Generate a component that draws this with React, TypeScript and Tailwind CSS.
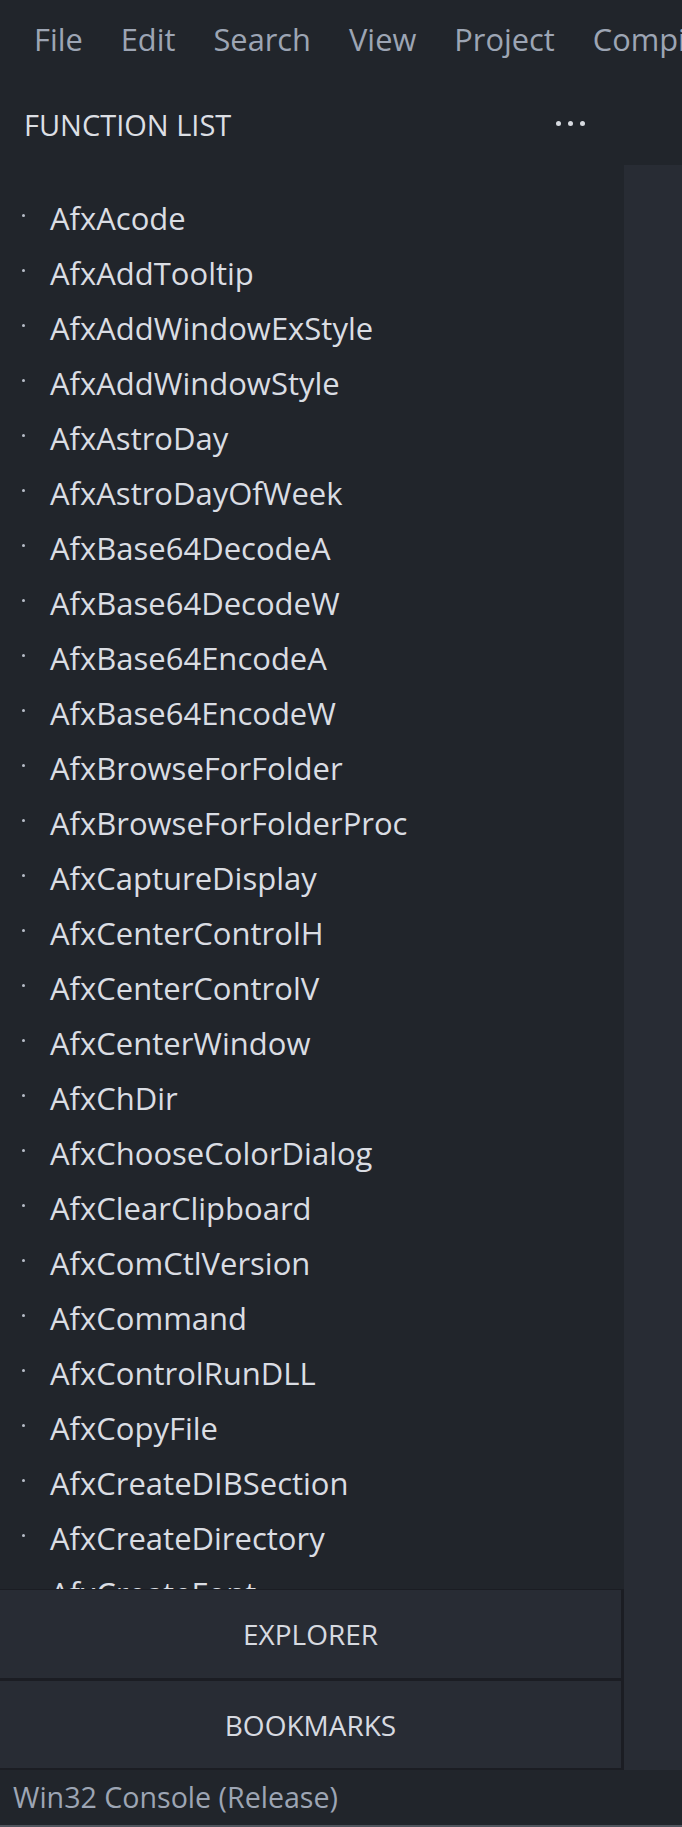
const menu = ["File", "Edit", "Search", "View", "Project", "Compile", "Help"]

const functions = [
    "AfxAcode",
    "AfxAddTooltip",
    "AfxAddWindowExStyle",
    "AfxAddWindowStyle",
    "AfxAstroDay",
    "AfxAstroDayOfWeek",
    "AfxBase64DecodeA",
    "AfxBase64DecodeW",
    "AfxBase64EncodeA",
    "AfxBase64EncodeW",
    "AfxBrowseForFolder",
    "AfxBrowseForFolderProc",
    "AfxCaptureDisplay",
    "AfxCenterControlH",
    "AfxCenterControlV",
    "AfxCenterWindow",
    "AfxChDir",
    "AfxChooseColorDialog",
    "AfxClearClipboard",
    "AfxComCtlVersion",
    "AfxCommand",
    "AfxControlRunDLL",
    "AfxCopyFile",
    "AfxCreateDIBSection",
    "AfxCreateDirectory",
    "AfxCreateFont",
    "AfxCreateFontEx",
]

export default function App() {
    return (
        <div className="w-[682px] h-[1827px] flex flex-col overflow-hidden bg-[#21252b] font-['Open_Sans',sans-serif]">
            {/* Menu bar */}
            <nav className="h-[80px] shrink-0 flex items-center gap-[38px] pl-[34px] whitespace-nowrap overflow-hidden text-[30.8px] text-[#9da5b4] -translate-y-[1px]">
                {menu.map((m) => (
                    <span key={m}>{m}</span>
                ))}
            </nav>

            {/* Panel header */}
            <div className="h-[85px] shrink-0 flex items-center justify-between pl-[24px] pr-[97px]">
                <span className="text-[29px] text-[#dcdfe4] translate-y-[2px]">
                    FUNCTION LIST
                </span>
                <div className="flex items-center gap-[7px] translate-y-[1px]">
                    <span className="w-[5px] h-[5px] rounded-full bg-[#d7dae0]" />
                    <span className="w-[5px] h-[5px] rounded-full bg-[#d7dae0]" />
                    <span className="w-[5px] h-[5px] rounded-full bg-[#d7dae0]" />
                </div>
            </div>

            <div className="flex flex-1 min-h-0">
                <div className="w-[624px] flex flex-col">
                    {/* Function list */}
                    <ul className="flex-1 min-h-0 overflow-hidden pt-[26px]">
                        {functions.map((f) => (
                            <li
                                key={f}
                                className="h-[55px] flex items-center whitespace-nowrap"
                            >
                                <span className="ml-[22px] w-[3px] h-[3px] rounded-full bg-[#b8bec9] -translate-y-[3px]" />
                                <span className="ml-[25px] text-[31px] text-[#dadde3]">
                                    {f}
                                </span>
                            </li>
                        ))}
                    </ul>

                    {/* Bottom tabs */}
                    <div className="h-[89px] shrink-0 flex items-center justify-center bg-[#282c34] border-t border-r-[3px] border-[#1b1d23] text-[28px] text-[#d7dae0]">
                        EXPLORER
                    </div>
                    <div className="h-[92px] shrink-0 flex items-center justify-center bg-[#282c34] border-t-[3px] border-b-2 border-r-[3px] border-[#1b1d23] text-[28px] text-[#d7dae0]">
                        BOOKMARKS
                    </div>
                </div>
                <div className="flex-1 bg-[#282c34]" />
            </div>

            {/* Status bar */}
            <div className="h-[57px] shrink-0 flex items-center pl-[13px] border-b-2 border-[#50555e] text-[28.6px] text-[#9da5b4] whitespace-nowrap">
                Win32 Console (Release)
            </div>
        </div>
    )
}
